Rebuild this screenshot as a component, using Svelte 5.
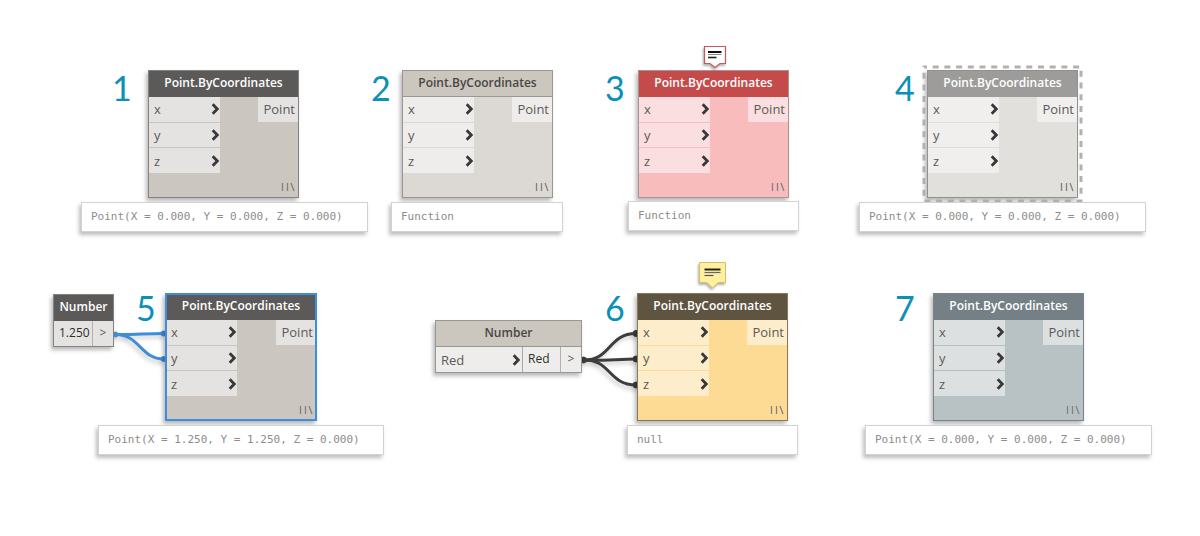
<script>
  const nodes = [
    { id: 1, x: 148, y: 70, theme: 'active', nx: 112, ny: 69, px: 81, py: 202, pw: 287, out: 'Point(X = 0.000, Y = 0.000, Z = 0.000)' },
    { id: 2, x: 402, y: 70, theme: 'inactive', nx: 371, ny: 69, px: 391, py: 202, pw: 172, out: 'Function' },
    { id: 3, x: 638, y: 70, theme: 'error', nx: 605, ny: 69, px: 628, py: 201, pw: 171, out: 'Function' },
    { id: 4, x: 927, y: 70, theme: 'frozen', nx: 895, ny: 69, px: 859, py: 202, pw: 287, out: 'Point(X = 0.000, Y = 0.000, Z = 0.000)' },
    { id: 5, x: 165, y: 293, theme: 'active selected', nx: 136, ny: 289, px: 98, py: 425, pw: 286, out: 'Point(X = 1.250, Y = 1.250, Z = 0.000)' },
    { id: 6, x: 637, y: 293, theme: 'warning', nx: 605, ny: 289, px: 627, py: 425, pw: 171, out: 'null' },
    { id: 7, x: 933, y: 293, theme: 'preview-off', nx: 895, ny: 289, px: 865, py: 425, pw: 287, out: 'Point(X = 0.000, Y = 0.000, Z = 0.000)' }
  ];
  const ports = ['x', 'y', 'z'];
</script>

{#snippet chevron()}
  <svg class="chevron" width="9" height="12" viewBox="0 0 9 12" aria-hidden="true">
    <path d="M1.700 1.300 6.300 6 1.700 10.700" />
  </svg>
{/snippet}

<main class="canvas">
  <svg class="wires" width="1200" height="536" viewBox="0 0 1200 536" aria-hidden="true">
    <g class="wire blue">
      <path d="M115 334.500C132 335 146 333.500 164 333.500" />
      <path d="M115 334.500C140 334 140 359 164 359" />
      <circle cx="115.500" cy="334.500" r="2.500" />
      <circle cx="163.500" cy="333.500" r="2.500" />
      <circle cx="163.500" cy="359" r="2.500" />
    </g>
    <g class="wire dark">
      <path d="M583 360C611 361 608 333.500 636 333.500" />
      <path d="M583 360C601 361 619 359 636 359" />
      <path d="M583 360C611 359 608 385 636 385" />
      <circle cx="583.500" cy="360" r="3" />
      <circle cx="636" cy="333.500" r="3" />
      <circle cx="636" cy="359" r="3" />
      <circle cx="636" cy="385" r="3" />
    </g>
  </svg>

  {#each nodes as n (n.id)}
    <span class="index" style="left:{n.nx}px;top:{n.ny}px">{n.id}</span>
    <article class="node {n.theme}" style="left:{n.x}px;top:{n.y}px">
      {#if n.theme === 'frozen'}
        <svg class="dashes" aria-hidden="true"><rect width="100%" height="100%" /></svg>
      {/if}
      <h2>Point.ByCoordinates</h2>
      <div class="body">
        <ul class="inputs">
          {#each ports as p}
            <li><span>{p}</span>{@render chevron()}</li>
          {/each}
        </ul>
        <div class="side">
          <span class="output">Point</span>
          <svg class="lacing" width="14" height="10" viewBox="0 0 14 10" aria-hidden="true">
            <path d="M1.500 1V9M6.500 1V9M10 1 13 9" />
          </svg>
        </div>
      </div>
    </article>
    <output class="result" style="left:{n.px}px;top:{n.py}px;width:{n.pw}px">{n.out}</output>
  {/each}

  <article class="node active number" style="left:53px;top:294px">
    <h2>Number</h2>
    <div class="values">
      <input class="value" aria-label="Number value" value="1.250" />
      <span class="exit">&gt;</span>
    </div>
  </article>

  <article class="node inactive number wide" style="left:435px;top:320px">
    <h2>Number</h2>
    <div class="values">
      <span class="entry"><span>Red</span>{@render chevron()}</span>
      <input class="value" aria-label="Watch value" value="Red" />
      <span class="exit">&gt;</span>
    </div>
  </article>

  <svg class="note" style="left:703px;top:45px" width="26" height="26" viewBox="0 0 26 26" aria-hidden="true">
    <path d="M1.500 1.500H22.500V18.500H17L12 22.500 7 18.500H1.500Z" fill="#fff" stroke="#c6575d" stroke-width="1.200" />
    <path d="M5 7H18.500" stroke="#111" stroke-width="2" />
    <path d="M5 9.500H18.500" stroke="#888" stroke-width="1" />
    <path d="M5 12.500H13.500" stroke="#222" stroke-width="1.600" />
  </svg>
  <svg class="note" style="left:698px;top:261px" width="30" height="30" viewBox="0 0 30 30" aria-hidden="true">
    <path d="M1.500 1.500H27.500V21.500H20L14.500 27 9 21.500H1.500Z" fill="#fff0a0" stroke="#d8be62" />
    <path d="M6.500 8.500H22.500" stroke="#222" stroke-width="2" />
    <path d="M6.500 11.500H22.500" stroke="#666" stroke-width="1.200" />
    <path d="M6.500 14.500H15.500" stroke="#555" stroke-width="1.200" />
  </svg>
</main>

<style>
  :global(body) {
    margin: 0;
    background: #fff;
  }
  .canvas {
    position: relative;
    min-height: 100vh;
    overflow: hidden;
    font-family: 'Open Sans', 'Noto Sans', sans-serif;
    font-size: 13px;
    color: #5c5a58;
  }
  .canvas * {
    box-sizing: border-box;
  }
  .index {
    position: absolute;
    font-family: Lato, sans-serif;
    font-size: 34px;
    line-height: 38px;
    color: #0a91b5;
  }
  .wires,
  .note {
    position: absolute;
    overflow: visible;
  }
  .wires {
    left: 0;
    top: 0;
    filter: drop-shadow(-2px 3px 2px rgb(0 0 0 / 0.2));
  }
  .note {
    fill: none;
    filter: drop-shadow(-1px 2px 1px rgb(0 0 0 / 0.3));
  }
  .wire path {
    fill: none;
    stroke-width: 3;
  }
  .blue {
    fill: #3f8ed8;
    stroke: #3f8ed8;
  }
  .dark {
    fill: #3d3d3d;
    stroke: #3d3d3d;
  }
  .node {
    position: absolute;
    width: 151px;
    border: 1px solid var(--edge);
    background: var(--fill);
    box-shadow: -2px 3px 4px rgb(0 0 0 / 0.28);
  }
  h2 {
    margin: 0;
    height: 26px;
    border-bottom: 1px solid var(--rule, var(--head));
    background: var(--head);
    color: var(--title, #fff);
    font-size: 12px;
    font-weight: 600;
    line-height: 24px;
    text-align: center;
    white-space: nowrap;
  }
  .body {
    display: flex;
    height: 100px;
  }
  .inputs {
    display: flex;
    flex-direction: column;
    gap: 1px;
    flex: 0 0 71px;
    height: 76px;
    margin: 0;
    padding: 0;
    list-style: none;
    background: var(--gap);
  }
  li {
    display: flex;
    flex: 1;
    align-items: center;
    justify-content: space-between;
    padding: 0 0 0 5px;
    background: var(--port);
    line-height: 24px;
  }
  .side {
    display: flex;
    flex: 1;
    flex-direction: column;
    align-items: flex-end;
    justify-content: space-between;
    padding-bottom: 5px;
  }
  .output {
    padding: 0 3px 0 5px;
    background: var(--port);
    line-height: 25px;
  }
  .chevron path {
    fill: none;
    stroke: #383838;
    stroke-width: 2.8;
  }
  .lacing {
    margin-right: 3px;
  }
  .lacing path {
    fill: none;
    stroke: #85817c;
    stroke-width: 1.3;
  }
  .result {
    position: absolute;
    padding: 0 9px;
    border: 1px solid #d2d2d2;
    background: #fff;
    box-shadow: -2px 3px 4px rgb(0 0 0 / 0.26);
    color: #8c8c8c;
    font-family: 'DejaVu Sans Mono', monospace;
    font-size: 11px;
    line-height: 28px;
    white-space: nowrap;
  }
  .active {
    --edge: #858381;
    --head: #5b5a58;
    --fill: #cbc6bf;
    --port: #e5e3e1;
    --gap: #c8c4be;
  }
  .inactive {
    --edge: #999693;
    --head: #cbc6be;
    --rule: #999693;
    --title: #494745;
    --fill: #dcd8d3;
    --port: #eeedeb;
    --gap: #dcd8d3;
  }
  .error {
    --edge: #a69594;
    --head: #c54b4b;
    --fill: #f8bcbd;
    --port: #fbdedf;
    --gap: #f6bec0;
  }
  .frozen {
    --edge: #91908e;
    --head: #9d9c9a;
    --fill: #e1e0dd;
    --port: #f0efee;
    --gap: #e0dfdc;
  }
  .dashes {
    position: absolute;
    left: -4px;
    top: -4px;
    width: 157px;
    height: 134px;
    overflow: visible;
  }
  .dashes rect {
    fill: none;
    stroke: #b1b1b1;
    stroke-width: 3;
    stroke-dasharray: 6 5.7;
    stroke-dashoffset: 3;
  }
  .selected {
    --edge: #3f8ed8;
    width: 152px;
  }
  .selected::after {
    content: '';
    position: absolute;
    inset: -1px;
    border: 2px solid var(--edge);
  }
  .warning {
    --edge: #857a5c;
    --head: #5f543f;
    --fill: #fddb94;
    --port: #feedca;
    --gap: #fbdc98;
  }
  .preview-off {
    --edge: #7a8387;
    --head: #758086;
    --fill: #b8c1c4;
    --port: #dce0e1;
    --gap: #b5bec1;
  }
  .number {
    width: 61px;
  }
  .wide {
    width: 147px;
  }
  .values {
    display: flex;
    height: 25px;
    background: var(--port);
    line-height: 24px;
  }
  .entry {
    display: flex;
    flex: 1;
    align-items: center;
    justify-content: space-between;
    padding: 0 1px 0 5px;
    line-height: 22px;
  }
  .value {
    width: 39px;
    padding: 0 0 3px 5px;
    border: 0;
    border-right: 1px solid #b3b1ae;
    background: transparent;
    color: #2d2d2d;
    font: 12px 'Open Sans', sans-serif;
  }
  .wide .value {
    border-left: 1px solid #aaa8a5;
  }
  .exit {
    flex: 0 0 20px;
    text-align: center;
    font-size: 12px;
  }
</style>
